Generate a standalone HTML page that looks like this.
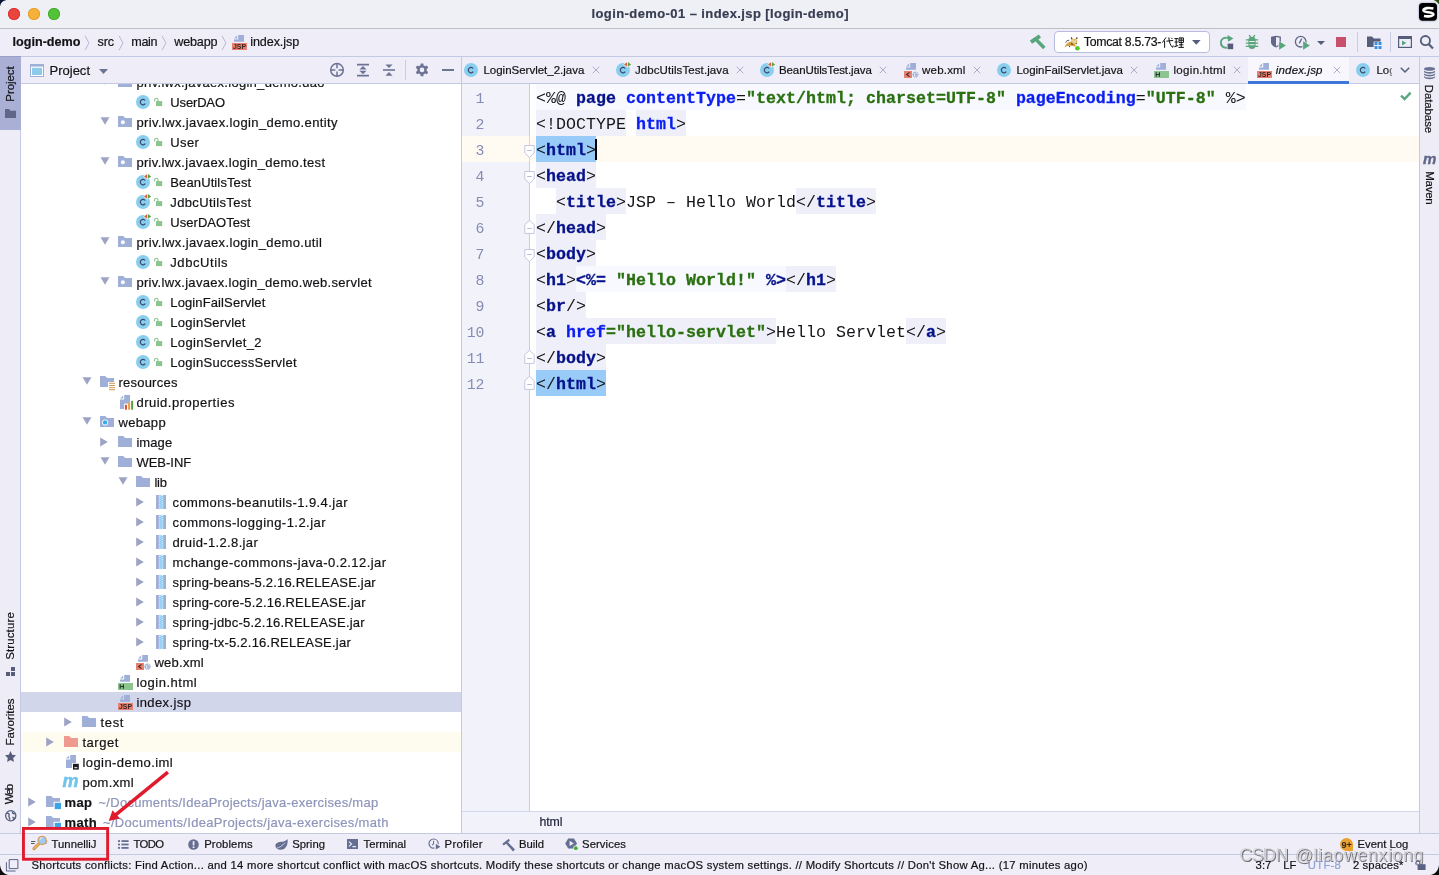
<!DOCTYPE html>
<html><head><meta charset="utf-8"><title>login-demo-01 - index.jsp</title>
<style>
html,body{margin:0;padding:0;}
body{width:1439px;height:875px;overflow:hidden;position:relative;background:#EFEEF8;font-family:"Liberation Sans",sans-serif;}
.t{position:absolute;white-space:pre;line-height:20px;height:20px;-webkit-text-stroke:0.2px currentColor;}
.a{position:absolute;}
svg{position:absolute;overflow:visible;}
.c{position:absolute;white-space:pre;font-family:"Liberation Mono",monospace;font-size:16.6px;line-height:20px;height:26px;letter-spacing:0.0385px;color:#141418;}
.c span{display:inline-block;height:26px;box-sizing:border-box;padding-top:5.3px;vertical-align:top;}
.k{color:#06128a;font-weight:bold;-webkit-text-stroke:0.3px #06128a;}
.n{color:#0a1ef2;font-weight:bold;-webkit-text-stroke:0.3px #0a1ef2;}
.s{color:#2a7011;font-weight:bold;-webkit-text-stroke:0.3px #2a7011;}
.ln{position:absolute;font-family:"Liberation Mono",monospace;font-size:14.8px;line-height:30px;height:26px;color:#858cb3;text-align:right;width:40px;left:444.5px;}
</style></head><body><div style="position:absolute;left:0;top:0;width:1439px;height:875px;overflow:hidden;will-change:transform">
<div class="a" style="left:0px;top:0px;width:1439px;height:28px;background:#EEF0F5;"></div>
<div class="a" style="left:0px;top:28px;width:1439px;height:1px;background:#BEBFC4;"></div>
<div class="a" style="left:8px;top:8px;width:12px;height:12px;border-radius:50%;background:#E8453F;box-shadow:inset 0 0 0 0.8px #DB2E2A"></div>
<div class="a" style="left:28px;top:8px;width:12px;height:12px;border-radius:50%;background:#F5B13A;box-shadow:inset 0 0 0 0.8px #E09A22"></div>
<div class="a" style="left:48px;top:8px;width:12px;height:12px;border-radius:50%;background:#52C336;box-shadow:inset 0 0 0 0.8px #3DA62A"></div>
<span class="t" style="left:591.50px;top:4.00px;font-size:13px;font-weight:bold;color:#383c52;letter-spacing:0.406px;">login-demo-01 – index.jsp [login-demo]</span>
<div class="a" style="left:0px;top:29px;width:1439px;height:27px;background:#EFEEF8;"></div>
<div class="a" style="left:0px;top:56px;width:1439px;height:1px;background:#C4C9E4;"></div>
<div class="a" style="left:0px;top:57px;width:20px;height:776px;background:#EEEDF7;"></div>
<div class="a" style="left:20px;top:57px;width:1px;height:776px;background:#C4C9E4;"></div>
<div class="a" style="left:0px;top:57px;width:20.5px;height:72.6px;background:#A9AFD5;"></div>
<div class="a" style="left:0px;top:56px;width:20.5px;height:1px;background:#98A0CA;"></div>
<div class="a" style="left:21px;top:57px;width:440px;height:26px;background:#EFEEF8;"></div>
<div class="a" style="left:21px;top:83px;width:440px;height:1px;background:#C4C9E4;"></div>
<div class="a" style="left:21px;top:84px;width:440px;height:749px;background:#FFFFFF;"></div>
<div class="a" style="left:461px;top:57px;width:1px;height:776px;background:#C4C9E4;"></div>
<div class="a" style="left:462px;top:57px;width:957px;height:26px;background:#EFEEF8;"></div>
<div class="a" style="left:462px;top:83px;width:957px;height:1px;background:#C4C9E4;"></div>
<div class="a" style="left:462px;top:84px;width:957px;height:727px;background:#FFFFFF;"></div>
<div class="a" style="left:462px;top:84px;width:67px;height:727px;background:#F2F2FA;"></div>
<div class="a" style="left:529px;top:84px;width:1px;height:727px;background:#C9CCE4;"></div>
<div class="a" style="left:1419px;top:57px;width:1px;height:776px;background:#C4C9E4;"></div>
<div class="a" style="left:1420px;top:57px;width:19px;height:776px;background:#EEEDF7;"></div>
<div class="a" style="left:462px;top:811px;width:957px;height:1px;background:#D3D7EC;"></div>
<div class="a" style="left:462px;top:812px;width:957px;height:21px;background:#F2F2FA;"></div>
<div class="a" style="left:0px;top:833px;width:1439px;height:1px;background:#C4C9E4;"></div>
<div class="a" style="left:0px;top:834px;width:1439px;height:20px;background:#EFEEF8;"></div>
<div class="a" style="left:0px;top:854px;width:1439px;height:1px;background:#C4C9E4;"></div>
<div class="a" style="left:0px;top:855px;width:1439px;height:20px;background:#EFEEF8;"></div>
<div class="a" style="left:21px;top:692px;width:440px;height:20px;background:#D2D6EA;"></div>
<div class="a" style="left:21px;top:732px;width:440px;height:20px;background:#FDFCEE;"></div>
<svg style="left:99.5px;top:77px" width="10" height="8" viewBox="0 0 10 8"><path d="M0.5 0.2H9.5L5 7.8Z" fill="#9EA3C5"/></svg>
<svg style="left:118px;top:76px" width="14" height="11" viewBox="0 0 14 11"><path d="M0 0H5.2L7.2 2H14V11H0Z" fill="#9FAFD8"/><circle cx="4.9" cy="6.2" r="2" fill="#fff"/></svg>
<span class="t" style="left:136.40px;top:73.00px;font-size:13px;color:#131316;letter-spacing:0.290px;">priv.lwx.javaex.login_demo.dao</span>
<svg style="left:135px;top:94px" width="16" height="16" viewBox="0 0 16 16"><circle cx="8" cy="8" r="7" fill="#88CFEF"/><path d="M10.2 6.5A2.7 2.7 0 1 0 10.2 9.7" fill="none" stroke="#3B4766" stroke-width="1.2"/></svg>
<svg style="left:152.6px;top:97px" width="10" height="10" viewBox="0 0 10 10"><rect x="3" y="4.1" width="6.2" height="5" fill="#8CC490"/><path d="M1.6 4.3V2.9A1.7 1.7 0 0 1 5 2.9V4.3" fill="none" stroke="#8CC490" stroke-width="1.1"/></svg>
<span class="t" style="left:170.30px;top:93.00px;font-size:13px;color:#131316;letter-spacing:-0.154px;">UserDAO</span>
<svg style="left:99.5px;top:117px" width="10" height="8" viewBox="0 0 10 8"><path d="M0.5 0.2H9.5L5 7.8Z" fill="#9EA3C5"/></svg>
<svg style="left:118px;top:116px" width="14" height="11" viewBox="0 0 14 11"><path d="M0 0H5.2L7.2 2H14V11H0Z" fill="#9FAFD8"/><circle cx="4.9" cy="6.2" r="2" fill="#fff"/></svg>
<span class="t" style="left:136.40px;top:113.00px;font-size:13px;color:#131316;letter-spacing:0.376px;">priv.lwx.javaex.login_demo.entity</span>
<svg style="left:135px;top:134px" width="16" height="16" viewBox="0 0 16 16"><circle cx="8" cy="8" r="7" fill="#88CFEF"/><path d="M10.2 6.5A2.7 2.7 0 1 0 10.2 9.7" fill="none" stroke="#3B4766" stroke-width="1.2"/></svg>
<svg style="left:152.6px;top:137px" width="10" height="10" viewBox="0 0 10 10"><rect x="3" y="4.1" width="6.2" height="5" fill="#8CC490"/><path d="M1.6 4.3V2.9A1.7 1.7 0 0 1 5 2.9V4.3" fill="none" stroke="#8CC490" stroke-width="1.1"/></svg>
<span class="t" style="left:170.30px;top:133.00px;font-size:13px;color:#131316;letter-spacing:0.349px;">User</span>
<svg style="left:99.5px;top:157px" width="10" height="8" viewBox="0 0 10 8"><path d="M0.5 0.2H9.5L5 7.8Z" fill="#9EA3C5"/></svg>
<svg style="left:118px;top:156px" width="14" height="11" viewBox="0 0 14 11"><path d="M0 0H5.2L7.2 2H14V11H0Z" fill="#9FAFD8"/><circle cx="4.9" cy="6.2" r="2" fill="#fff"/></svg>
<span class="t" style="left:136.40px;top:153.00px;font-size:13px;color:#131316;letter-spacing:0.322px;">priv.lwx.javaex.login_demo.test</span>
<svg style="left:135px;top:174px" width="16" height="16" viewBox="0 0 16 16"><circle cx="8" cy="8" r="7" fill="#88CFEF"/><path d="M10.2 6.5A2.7 2.7 0 1 0 10.2 9.7" fill="none" stroke="#3B4766" stroke-width="1.2"/><path d="M8.6 2.4L12.3 -0.4V5.2Z" fill="#fff" stroke="#fff" stroke-width="0.5"/><path d="M12.7 -0.4V5.2L16.6 2.4Z" fill="#fff" stroke="#fff" stroke-width="0.5"/><path d="M9 2.4L12.2 0V4.8Z" fill="#E0623C"/><path d="M13 0V4.8L16.2 2.4Z" fill="#5BA346"/></svg>
<svg style="left:152.6px;top:177px" width="10" height="10" viewBox="0 0 10 10"><rect x="3" y="4.1" width="6.2" height="5" fill="#8CC490"/><path d="M1.6 4.3V2.9A1.7 1.7 0 0 1 5 2.9V4.3" fill="none" stroke="#8CC490" stroke-width="1.1"/></svg>
<span class="t" style="left:170.30px;top:173.00px;font-size:13px;color:#131316;letter-spacing:0.118px;">BeanUtilsTest</span>
<svg style="left:135px;top:194px" width="16" height="16" viewBox="0 0 16 16"><circle cx="8" cy="8" r="7" fill="#88CFEF"/><path d="M10.2 6.5A2.7 2.7 0 1 0 10.2 9.7" fill="none" stroke="#3B4766" stroke-width="1.2"/><path d="M8.6 2.4L12.3 -0.4V5.2Z" fill="#fff" stroke="#fff" stroke-width="0.5"/><path d="M12.7 -0.4V5.2L16.6 2.4Z" fill="#fff" stroke="#fff" stroke-width="0.5"/><path d="M9 2.4L12.2 0V4.8Z" fill="#E0623C"/><path d="M13 0V4.8L16.2 2.4Z" fill="#5BA346"/></svg>
<svg style="left:152.6px;top:197px" width="10" height="10" viewBox="0 0 10 10"><rect x="3" y="4.1" width="6.2" height="5" fill="#8CC490"/><path d="M1.6 4.3V2.9A1.7 1.7 0 0 1 5 2.9V4.3" fill="none" stroke="#8CC490" stroke-width="1.1"/></svg>
<span class="t" style="left:170.30px;top:193.00px;font-size:13px;color:#131316;letter-spacing:0.360px;">JdbcUtilsTest</span>
<svg style="left:135px;top:214px" width="16" height="16" viewBox="0 0 16 16"><circle cx="8" cy="8" r="7" fill="#88CFEF"/><path d="M10.2 6.5A2.7 2.7 0 1 0 10.2 9.7" fill="none" stroke="#3B4766" stroke-width="1.2"/><path d="M8.6 2.4L12.3 -0.4V5.2Z" fill="#fff" stroke="#fff" stroke-width="0.5"/><path d="M12.7 -0.4V5.2L16.6 2.4Z" fill="#fff" stroke="#fff" stroke-width="0.5"/><path d="M9 2.4L12.2 0V4.8Z" fill="#E0623C"/><path d="M13 0V4.8L16.2 2.4Z" fill="#5BA346"/></svg>
<svg style="left:152.6px;top:217px" width="10" height="10" viewBox="0 0 10 10"><rect x="3" y="4.1" width="6.2" height="5" fill="#8CC490"/><path d="M1.6 4.3V2.9A1.7 1.7 0 0 1 5 2.9V4.3" fill="none" stroke="#8CC490" stroke-width="1.1"/></svg>
<span class="t" style="left:170.30px;top:213.00px;font-size:13px;color:#131316;letter-spacing:0.043px;">UserDAOTest</span>
<svg style="left:99.5px;top:237px" width="10" height="8" viewBox="0 0 10 8"><path d="M0.5 0.2H9.5L5 7.8Z" fill="#9EA3C5"/></svg>
<svg style="left:118px;top:236px" width="14" height="11" viewBox="0 0 14 11"><path d="M0 0H5.2L7.2 2H14V11H0Z" fill="#9FAFD8"/><circle cx="4.9" cy="6.2" r="2" fill="#fff"/></svg>
<span class="t" style="left:136.40px;top:233.00px;font-size:13px;color:#131316;letter-spacing:0.366px;">priv.lwx.javaex.login_demo.util</span>
<svg style="left:135px;top:254px" width="16" height="16" viewBox="0 0 16 16"><circle cx="8" cy="8" r="7" fill="#88CFEF"/><path d="M10.2 6.5A2.7 2.7 0 1 0 10.2 9.7" fill="none" stroke="#3B4766" stroke-width="1.2"/></svg>
<svg style="left:152.6px;top:257px" width="10" height="10" viewBox="0 0 10 10"><rect x="3" y="4.1" width="6.2" height="5" fill="#8CC490"/><path d="M1.6 4.3V2.9A1.7 1.7 0 0 1 5 2.9V4.3" fill="none" stroke="#8CC490" stroke-width="1.1"/></svg>
<span class="t" style="left:170.30px;top:253.00px;font-size:13px;color:#131316;letter-spacing:0.569px;">JdbcUtils</span>
<svg style="left:99.5px;top:277px" width="10" height="8" viewBox="0 0 10 8"><path d="M0.5 0.2H9.5L5 7.8Z" fill="#9EA3C5"/></svg>
<svg style="left:118px;top:276px" width="14" height="11" viewBox="0 0 14 11"><path d="M0 0H5.2L7.2 2H14V11H0Z" fill="#9FAFD8"/><circle cx="4.9" cy="6.2" r="2" fill="#fff"/></svg>
<span class="t" style="left:136.40px;top:273.00px;font-size:13px;color:#131316;letter-spacing:0.309px;">priv.lwx.javaex.login_demo.web.servlet</span>
<svg style="left:135px;top:294px" width="16" height="16" viewBox="0 0 16 16"><circle cx="8" cy="8" r="7" fill="#88CFEF"/><path d="M10.2 6.5A2.7 2.7 0 1 0 10.2 9.7" fill="none" stroke="#3B4766" stroke-width="1.2"/></svg>
<svg style="left:152.6px;top:297px" width="10" height="10" viewBox="0 0 10 10"><rect x="3" y="4.1" width="6.2" height="5" fill="#8CC490"/><path d="M1.6 4.3V2.9A1.7 1.7 0 0 1 5 2.9V4.3" fill="none" stroke="#8CC490" stroke-width="1.1"/></svg>
<span class="t" style="left:170.30px;top:293.00px;font-size:13px;color:#131316;letter-spacing:0.119px;">LoginFailServlet</span>
<svg style="left:135px;top:314px" width="16" height="16" viewBox="0 0 16 16"><circle cx="8" cy="8" r="7" fill="#88CFEF"/><path d="M10.2 6.5A2.7 2.7 0 1 0 10.2 9.7" fill="none" stroke="#3B4766" stroke-width="1.2"/></svg>
<svg style="left:152.6px;top:317px" width="10" height="10" viewBox="0 0 10 10"><rect x="3" y="4.1" width="6.2" height="5" fill="#8CC490"/><path d="M1.6 4.3V2.9A1.7 1.7 0 0 1 5 2.9V4.3" fill="none" stroke="#8CC490" stroke-width="1.1"/></svg>
<span class="t" style="left:170.30px;top:313.00px;font-size:13px;color:#131316;letter-spacing:0.265px;">LoginServlet</span>
<svg style="left:135px;top:334px" width="16" height="16" viewBox="0 0 16 16"><circle cx="8" cy="8" r="7" fill="#88CFEF"/><path d="M10.2 6.5A2.7 2.7 0 1 0 10.2 9.7" fill="none" stroke="#3B4766" stroke-width="1.2"/></svg>
<svg style="left:152.6px;top:337px" width="10" height="10" viewBox="0 0 10 10"><rect x="3" y="4.1" width="6.2" height="5" fill="#8CC490"/><path d="M1.6 4.3V2.9A1.7 1.7 0 0 1 5 2.9V4.3" fill="none" stroke="#8CC490" stroke-width="1.1"/></svg>
<span class="t" style="left:170.30px;top:333.00px;font-size:13px;color:#131316;letter-spacing:0.344px;">LoginServlet_2</span>
<svg style="left:135px;top:354px" width="16" height="16" viewBox="0 0 16 16"><circle cx="8" cy="8" r="7" fill="#88CFEF"/><path d="M10.2 6.5A2.7 2.7 0 1 0 10.2 9.7" fill="none" stroke="#3B4766" stroke-width="1.2"/></svg>
<svg style="left:152.6px;top:357px" width="10" height="10" viewBox="0 0 10 10"><rect x="3" y="4.1" width="6.2" height="5" fill="#8CC490"/><path d="M1.6 4.3V2.9A1.7 1.7 0 0 1 5 2.9V4.3" fill="none" stroke="#8CC490" stroke-width="1.1"/></svg>
<span class="t" style="left:170.30px;top:353.00px;font-size:13px;color:#131316;letter-spacing:0.272px;">LoginSuccessServlet</span>
<svg style="left:81.5px;top:377px" width="10" height="8" viewBox="0 0 10 8"><path d="M0.5 0.2H9.5L5 7.8Z" fill="#9EA3C5"/></svg>
<svg style="left:100px;top:376px" width="16" height="14" viewBox="0 0 16 14"><path d="M0 0H5.2L7.2 2H14V11H0Z" fill="#9FAFD8"/><rect x="8" y="6" width="8" height="8" fill="#fff"/><path d="M9 7.3H15M9 9.5H15M9 11.7H15M9 13.8H15" stroke="#D09A4A" stroke-width="1.1"/></svg>
<span class="t" style="left:118.40px;top:373.00px;font-size:13px;color:#131316;letter-spacing:0.240px;">resources</span>
<svg style="left:120px;top:395px" width="14" height="15" viewBox="0 0 14 15"><path d="M4.2 0H10V14H0V4.6H4.2Z" fill="#9FAFD8"/><path d="M3.1 0.5V3.5H0.1Z" fill="#9FAFD8"/><rect x="4.2" y="8.6" width="9.8" height="6" fill="#fff"/><rect x="5" y="9.8" width="2" height="4.9" fill="#DB5831"/><rect x="8.1" y="7.8" width="2" height="6.9" fill="#EB9D41"/><rect x="11.1" y="5.8" width="2" height="8.9" fill="#5AA23E"/></svg>
<span class="t" style="left:136.40px;top:393.00px;font-size:13px;color:#131316;letter-spacing:0.511px;">druid.properties</span>
<svg style="left:81.5px;top:417px" width="10" height="8" viewBox="0 0 10 8"><path d="M0.5 0.2H9.5L5 7.8Z" fill="#9EA3C5"/></svg>
<svg style="left:100px;top:416px" width="14" height="11" viewBox="0 0 14 11"><path d="M0 0H5.2L7.2 2H14V11H0Z" fill="#9FAFD8"/><circle cx="5.1" cy="6.4" r="3" fill="#fff"/><circle cx="5.1" cy="6.4" r="2.2" fill="#36ABEA"/></svg>
<span class="t" style="left:118.40px;top:413.00px;font-size:13px;color:#131316;letter-spacing:0.351px;">webapp</span>
<svg style="left:100px;top:436.5px" width="8" height="10" viewBox="0 0 8 10"><path d="M0.2 0.5V9.5L7.8 5Z" fill="#9EA3C5"/></svg>
<svg style="left:118px;top:436px" width="14" height="11" viewBox="0 0 14 11"><path d="M0 0H5.2L7.2 2H14V11H0Z" fill="#9FAFD8"/></svg>
<span class="t" style="left:136.40px;top:433.00px;font-size:13px;color:#131316;letter-spacing:0.095px;">image</span>
<svg style="left:99.5px;top:457px" width="10" height="8" viewBox="0 0 10 8"><path d="M0.5 0.2H9.5L5 7.8Z" fill="#9EA3C5"/></svg>
<svg style="left:118px;top:456px" width="14" height="11" viewBox="0 0 14 11"><path d="M0 0H5.2L7.2 2H14V11H0Z" fill="#9FAFD8"/></svg>
<span class="t" style="left:136.40px;top:453.00px;font-size:13px;color:#131316;letter-spacing:0.002px;">WEB-INF</span>
<svg style="left:117.5px;top:477px" width="10" height="8" viewBox="0 0 10 8"><path d="M0.5 0.2H9.5L5 7.8Z" fill="#9EA3C5"/></svg>
<svg style="left:136px;top:476px" width="14" height="11" viewBox="0 0 14 11"><path d="M0 0H5.2L7.2 2H14V11H0Z" fill="#9FAFD8"/></svg>
<span class="t" style="left:154.40px;top:473.00px;font-size:13px;color:#131316;letter-spacing:-0.208px;">lib</span>
<svg style="left:136px;top:496.5px" width="8" height="10" viewBox="0 0 8 10"><path d="M0.2 0.5V9.5L7.8 5Z" fill="#9EA3C5"/></svg>
<svg style="left:156px;top:495px" width="10" height="14" viewBox="0 0 10 14"><rect x="0" y="0" width="2.9" height="14" fill="#9FAFD8"/><rect x="7.1" y="0" width="2.9" height="14" fill="#9FAFD8"/><path d="M3.2 0.3L6.8 1.3L3.2 2.25M3.2 2.25L6.8 3.25L3.2 4.2M3.2 4.2L6.8 5.2L3.2 6.15M3.2 6.15L6.8 7.15L3.2 8.1M3.2 8.1L6.8 9.1L3.2 10.05M3.2 10.05L6.8 11.05L3.2 12M3.2 12L6.8 13L3.2 13.95" stroke="#45AEEA" stroke-width="0.6" fill="none"/></svg>
<span class="t" style="left:172.50px;top:493.00px;font-size:13px;color:#131316;letter-spacing:0.426px;">commons-beanutils-1.9.4.jar</span>
<svg style="left:136px;top:516.5px" width="8" height="10" viewBox="0 0 8 10"><path d="M0.2 0.5V9.5L7.8 5Z" fill="#9EA3C5"/></svg>
<svg style="left:156px;top:515px" width="10" height="14" viewBox="0 0 10 14"><rect x="0" y="0" width="2.9" height="14" fill="#9FAFD8"/><rect x="7.1" y="0" width="2.9" height="14" fill="#9FAFD8"/><path d="M3.2 0.3L6.8 1.3L3.2 2.25M3.2 2.25L6.8 3.25L3.2 4.2M3.2 4.2L6.8 5.2L3.2 6.15M3.2 6.15L6.8 7.15L3.2 8.1M3.2 8.1L6.8 9.1L3.2 10.05M3.2 10.05L6.8 11.05L3.2 12M3.2 12L6.8 13L3.2 13.95" stroke="#45AEEA" stroke-width="0.6" fill="none"/></svg>
<span class="t" style="left:172.50px;top:513.00px;font-size:13px;color:#131316;letter-spacing:0.451px;">commons-logging-1.2.jar</span>
<svg style="left:136px;top:536.5px" width="8" height="10" viewBox="0 0 8 10"><path d="M0.2 0.5V9.5L7.8 5Z" fill="#9EA3C5"/></svg>
<svg style="left:156px;top:535px" width="10" height="14" viewBox="0 0 10 14"><rect x="0" y="0" width="2.9" height="14" fill="#9FAFD8"/><rect x="7.1" y="0" width="2.9" height="14" fill="#9FAFD8"/><path d="M3.2 0.3L6.8 1.3L3.2 2.25M3.2 2.25L6.8 3.25L3.2 4.2M3.2 4.2L6.8 5.2L3.2 6.15M3.2 6.15L6.8 7.15L3.2 8.1M3.2 8.1L6.8 9.1L3.2 10.05M3.2 10.05L6.8 11.05L3.2 12M3.2 12L6.8 13L3.2 13.95" stroke="#45AEEA" stroke-width="0.6" fill="none"/></svg>
<span class="t" style="left:172.50px;top:533.00px;font-size:13px;color:#131316;letter-spacing:0.363px;">druid-1.2.8.jar</span>
<svg style="left:136px;top:556.5px" width="8" height="10" viewBox="0 0 8 10"><path d="M0.2 0.5V9.5L7.8 5Z" fill="#9EA3C5"/></svg>
<svg style="left:156px;top:555px" width="10" height="14" viewBox="0 0 10 14"><rect x="0" y="0" width="2.9" height="14" fill="#9FAFD8"/><rect x="7.1" y="0" width="2.9" height="14" fill="#9FAFD8"/><path d="M3.2 0.3L6.8 1.3L3.2 2.25M3.2 2.25L6.8 3.25L3.2 4.2M3.2 4.2L6.8 5.2L3.2 6.15M3.2 6.15L6.8 7.15L3.2 8.1M3.2 8.1L6.8 9.1L3.2 10.05M3.2 10.05L6.8 11.05L3.2 12M3.2 12L6.8 13L3.2 13.95" stroke="#45AEEA" stroke-width="0.6" fill="none"/></svg>
<span class="t" style="left:172.50px;top:553.00px;font-size:13px;color:#131316;letter-spacing:0.421px;">mchange-commons-java-0.2.12.jar</span>
<svg style="left:136px;top:576.5px" width="8" height="10" viewBox="0 0 8 10"><path d="M0.2 0.5V9.5L7.8 5Z" fill="#9EA3C5"/></svg>
<svg style="left:156px;top:575px" width="10" height="14" viewBox="0 0 10 14"><rect x="0" y="0" width="2.9" height="14" fill="#9FAFD8"/><rect x="7.1" y="0" width="2.9" height="14" fill="#9FAFD8"/><path d="M3.2 0.3L6.8 1.3L3.2 2.25M3.2 2.25L6.8 3.25L3.2 4.2M3.2 4.2L6.8 5.2L3.2 6.15M3.2 6.15L6.8 7.15L3.2 8.1M3.2 8.1L6.8 9.1L3.2 10.05M3.2 10.05L6.8 11.05L3.2 12M3.2 12L6.8 13L3.2 13.95" stroke="#45AEEA" stroke-width="0.6" fill="none"/></svg>
<span class="t" style="left:172.50px;top:573.00px;font-size:13px;color:#131316;letter-spacing:0.197px;">spring-beans-5.2.16.RELEASE.jar</span>
<svg style="left:136px;top:596.5px" width="8" height="10" viewBox="0 0 8 10"><path d="M0.2 0.5V9.5L7.8 5Z" fill="#9EA3C5"/></svg>
<svg style="left:156px;top:595px" width="10" height="14" viewBox="0 0 10 14"><rect x="0" y="0" width="2.9" height="14" fill="#9FAFD8"/><rect x="7.1" y="0" width="2.9" height="14" fill="#9FAFD8"/><path d="M3.2 0.3L6.8 1.3L3.2 2.25M3.2 2.25L6.8 3.25L3.2 4.2M3.2 4.2L6.8 5.2L3.2 6.15M3.2 6.15L6.8 7.15L3.2 8.1M3.2 8.1L6.8 9.1L3.2 10.05M3.2 10.05L6.8 11.05L3.2 12M3.2 12L6.8 13L3.2 13.95" stroke="#45AEEA" stroke-width="0.6" fill="none"/></svg>
<span class="t" style="left:172.50px;top:593.00px;font-size:13px;color:#131316;letter-spacing:0.202px;">spring-core-5.2.16.RELEASE.jar</span>
<svg style="left:136px;top:616.5px" width="8" height="10" viewBox="0 0 8 10"><path d="M0.2 0.5V9.5L7.8 5Z" fill="#9EA3C5"/></svg>
<svg style="left:156px;top:615px" width="10" height="14" viewBox="0 0 10 14"><rect x="0" y="0" width="2.9" height="14" fill="#9FAFD8"/><rect x="7.1" y="0" width="2.9" height="14" fill="#9FAFD8"/><path d="M3.2 0.3L6.8 1.3L3.2 2.25M3.2 2.25L6.8 3.25L3.2 4.2M3.2 4.2L6.8 5.2L3.2 6.15M3.2 6.15L6.8 7.15L3.2 8.1M3.2 8.1L6.8 9.1L3.2 10.05M3.2 10.05L6.8 11.05L3.2 12M3.2 12L6.8 13L3.2 13.95" stroke="#45AEEA" stroke-width="0.6" fill="none"/></svg>
<span class="t" style="left:172.50px;top:613.00px;font-size:13px;color:#131316;letter-spacing:0.221px;">spring-jdbc-5.2.16.RELEASE.jar</span>
<svg style="left:136px;top:636.5px" width="8" height="10" viewBox="0 0 8 10"><path d="M0.2 0.5V9.5L7.8 5Z" fill="#9EA3C5"/></svg>
<svg style="left:156px;top:635px" width="10" height="14" viewBox="0 0 10 14"><rect x="0" y="0" width="2.9" height="14" fill="#9FAFD8"/><rect x="7.1" y="0" width="2.9" height="14" fill="#9FAFD8"/><path d="M3.2 0.3L6.8 1.3L3.2 2.25M3.2 2.25L6.8 3.25L3.2 4.2M3.2 4.2L6.8 5.2L3.2 6.15M3.2 6.15L6.8 7.15L3.2 8.1M3.2 8.1L6.8 9.1L3.2 10.05M3.2 10.05L6.8 11.05L3.2 12M3.2 12L6.8 13L3.2 13.95" stroke="#45AEEA" stroke-width="0.6" fill="none"/></svg>
<span class="t" style="left:172.50px;top:633.00px;font-size:13px;color:#131316;letter-spacing:0.234px;">spring-tx-5.2.16.RELEASE.jar</span>
<svg style="left:136px;top:655px" width="15" height="15" viewBox="0 0 15 15"><path d="M6.2 0H12V6.8H2V4.6H6.2Z" fill="#9FAFD8"/><path d="M5.1 0.5V3.5H2.1Z" fill="#9FAFD8"/><rect x="0" y="8" width="8" height="7" fill="#E8806F"/><path d="M5.6 9.4L2.6 11.5L5.6 13.6" stroke="#3a2622" stroke-width="1.1" fill="none"/><circle cx="11.5" cy="11.5" r="3.6" fill="#fff"/><circle cx="11.5" cy="11.5" r="3.1" fill="#9FAFD8"/><path d="M9.6 10.2C10.8 9.8 11 11 10.4 11.8C10.2 12.6 11 13.2 11.2 14M12.4 9C12 10 13 10.6 13.8 10.4M12.6 12.4L13.6 13" stroke="#fff" stroke-width="0.9" fill="none"/></svg>
<span class="t" style="left:154.40px;top:653.00px;font-size:13px;color:#131316;letter-spacing:0.269px;">web.xml</span>
<svg style="left:118px;top:675px" width="15" height="15" viewBox="0 0 15 15"><path d="M6.2 0H12V6.8H2V4.6H6.2Z" fill="#9FAFD8"/><path d="M5.1 0.5V3.5H2.1Z" fill="#9FAFD8"/><rect x="0" y="8" width="15" height="7" fill="#8CC590"/><path d="M2.2 9.3V13.8M5.4 9.3V13.8M2.2 11.5H5.4" stroke="#2B3A2D" stroke-width="1.2" fill="none"/></svg>
<span class="t" style="left:136.40px;top:673.00px;font-size:13px;color:#131316;letter-spacing:0.518px;">login.html</span>
<svg style="left:118px;top:695px" width="15" height="15" viewBox="0 0 15 15"><path d="M6.2 0H12V6.8H2V4.6H6.2Z" fill="#9FAFD8"/><path d="M5.1 0.5V3.5H2.1Z" fill="#9FAFD8"/><rect x="0" y="8" width="15" height="7" fill="#E8806F"/><text x="7.5" y="14.1" font-family="Liberation Sans,sans-serif" font-weight="bold" font-size="6.4" text-anchor="middle" fill="#3a2622" textLength="13" lengthAdjust="spacingAndGlyphs">JSP</text></svg>
<span class="t" style="left:136.40px;top:693.00px;font-size:13px;color:#131316;letter-spacing:0.411px;">index.jsp</span>
<svg style="left:64px;top:716.5px" width="8" height="10" viewBox="0 0 8 10"><path d="M0.2 0.5V9.5L7.8 5Z" fill="#9EA3C5"/></svg>
<svg style="left:82px;top:716px" width="14" height="11" viewBox="0 0 14 11"><path d="M0 0H5.2L7.2 2H14V11H0Z" fill="#9FAFD8"/></svg>
<span class="t" style="left:100.40px;top:713.00px;font-size:13px;color:#131316;letter-spacing:0.710px;">test</span>
<svg style="left:46px;top:736.5px" width="8" height="10" viewBox="0 0 8 10"><path d="M0.2 0.5V9.5L7.8 5Z" fill="#9EA3C5"/></svg>
<svg style="left:64px;top:736px" width="14" height="11" viewBox="0 0 14 11"><path d="M0 0H5.2L7.2 2H14V11H0Z" fill="#EE9A8E"/></svg>
<span class="t" style="left:82.40px;top:733.00px;font-size:13px;color:#131316;letter-spacing:0.550px;">target</span>
<svg style="left:66px;top:755px" width="14" height="15" viewBox="0 0 14 15"><path d="M4.2 0H10V13H0V4.6H4.2Z" fill="#9FAFD8"/><path d="M3.1 0.5V3.5H0.1Z" fill="#9FAFD8"/><rect x="6" y="8" width="7.5" height="7" fill="#fff"/><rect x="7" y="8.8" width="5.8" height="5.8" fill="#1b1b1f"/><rect x="8.3" y="12.2" width="3" height="1" fill="#fff"/></svg>
<span class="t" style="left:82.40px;top:753.00px;font-size:13px;color:#131316;letter-spacing:0.443px;">login-demo.iml</span>
<svg style="left:63px;top:775px" width="16" height="14" viewBox="0 0 16 14"><text x="-0.4" y="12.2" font-family="Liberation Sans,sans-serif" font-weight="bold" font-style="italic" font-size="18.5" fill="#6FC4EC" stroke="#6FC4EC" stroke-width="0.5" textLength="16" lengthAdjust="spacingAndGlyphs">m</text></svg>
<span class="t" style="left:82.40px;top:773.00px;font-size:13px;color:#131316;letter-spacing:0.362px;">pom.xml</span>
<svg style="left:28px;top:796.5px" width="8" height="10" viewBox="0 0 8 10"><path d="M0.2 0.5V9.5L7.8 5Z" fill="#9EA3C5"/></svg>
<svg style="left:46px;top:796px" width="16" height="14" viewBox="0 0 16 14"><path d="M0 0H5.2L7.2 2H14V11H0Z" fill="#9FAFD8"/><rect x="7.6" y="5.8" width="8" height="8" fill="#fff"/><rect x="8.7" y="6.8" width="6.3" height="6.3" fill="#3BA4E8"/></svg>
<span class="t" style="left:64.60px;top:793.00px;font-size:13px;font-weight:bold;color:#131316;letter-spacing:0.333px;">map</span>
<span class="t" style="left:98.50px;top:793.00px;font-size:13px;color:#8E95BA;letter-spacing:0.268px;">~/Documents/IdeaProjects/java-exercises/map</span>
<svg style="left:28px;top:816.5px" width="8" height="10" viewBox="0 0 8 10"><path d="M0.2 0.5V9.5L7.8 5Z" fill="#9EA3C5"/></svg>
<svg style="left:46px;top:816px" width="16" height="14" viewBox="0 0 16 14"><path d="M0 0H5.2L7.2 2H14V11H0Z" fill="#9FAFD8"/><rect x="7.6" y="5.8" width="8" height="8" fill="#fff"/><rect x="8.7" y="6.8" width="6.3" height="6.3" fill="#3BA4E8"/></svg>
<span class="t" style="left:64.60px;top:813.00px;font-size:13px;font-weight:bold;color:#131316;letter-spacing:0.312px;">math</span>
<span class="t" style="left:103.00px;top:813.00px;font-size:13px;color:#8E95BA;letter-spacing:0.311px;">~/Documents/IdeaProjects/java-exercises/math</span>
<div class="a" style="left:21px;top:57px;width:440px;height:26px;background:#EFEEF8;"></div>
<div class="a" style="left:21px;top:83px;width:440px;height:1px;background:#C4C9E4;"></div>
<div class="a" style="left:0px;top:833px;width:461px;height:1px;background:#C4C9E4;"></div>
<div class="a" style="left:0px;top:834px;width:461px;height:20px;background:#EFEEF8;"></div>
<div class="a" style="left:462px;top:136px;width:957px;height:26px;background:#FFFBF3;"></div>
<div class="a" style="left:529px;top:136px;width:1px;height:26px;background:#D5D6E6;"></div>
<div class="c" style="left:536px;top:84px"><span style="background:#F8F9FE">&lt;%@ </span><span class="k" style="background:#F8F9FE">page</span><span style="background:#F8F9FE"> </span><span class="n" style="background:#F8F9FE">contentType</span><span style="background:#F8F9FE">=</span><span class="s" style="background:#F8F9FE">&quot;text/html; charset=UTF-8&quot;</span><span style="background:#F8F9FE"> </span><span class="n" style="background:#F8F9FE">pageEncoding</span><span style="background:#F8F9FE">=</span><span class="s" style="background:#F8F9FE">&quot;UTF-8&quot;</span><span style="background:#F8F9FE"> %&gt;</span></div>
<div class="ln" style="top:84px">1</div>
<div class="c" style="left:536px;top:110px"><span style="background:#EFEFF9">&lt;!DOCTYPE</span><span> </span><span class="n" style="background:#EFEFF9">html</span><span style="background:#EFEFF9">&gt;</span></div>
<div class="ln" style="top:110px">2</div>
<div class="c" style="left:536px;top:136px"><span style="background:#99CBF8">&lt;</span><span class="k" style="background:#99CBF8">html</span><span style="background:#99CBF8">&gt;</span></div>
<div class="ln" style="top:136px">3</div>
<div class="c" style="left:536px;top:162px"><span style="background:#EFEFF9">&lt;</span><span class="k" style="background:#EFEFF9">head</span><span style="background:#EFEFF9">&gt;</span></div>
<div class="ln" style="top:162px">4</div>
<div class="c" style="left:536px;top:188px"><span>  </span><span style="background:#EFEFF9">&lt;</span><span class="k" style="background:#EFEFF9">title</span><span style="background:#EFEFF9">&gt;</span><span>JSP – Hello World</span><span style="background:#EFEFF9">&lt;/</span><span class="k" style="background:#EFEFF9">title</span><span style="background:#EFEFF9">&gt;</span></div>
<div class="ln" style="top:188px">5</div>
<div class="c" style="left:536px;top:214px"><span style="background:#EFEFF9">&lt;/</span><span class="k" style="background:#EFEFF9">head</span><span style="background:#EFEFF9">&gt;</span></div>
<div class="ln" style="top:214px">6</div>
<div class="c" style="left:536px;top:240px"><span style="background:#EFEFF9">&lt;</span><span class="k" style="background:#EFEFF9">body</span><span style="background:#EFEFF9">&gt;</span></div>
<div class="ln" style="top:240px">7</div>
<div class="c" style="left:536px;top:266px"><span style="background:#EFEFF9">&lt;</span><span class="k" style="background:#EFEFF9">h1</span><span style="background:#EFEFF9">&gt;</span><span class="k" style="background:#F8F9FE">&lt;%= </span><span class="s" style="background:#F8F9FE">&quot;Hello World!&quot;</span><span class="k" style="background:#F8F9FE"> %&gt;</span><span style="background:#EFEFF9">&lt;/</span><span class="k" style="background:#EFEFF9">h1</span><span style="background:#EFEFF9">&gt;</span></div>
<div class="ln" style="top:266px">8</div>
<div class="c" style="left:536px;top:292px"><span style="background:#EFEFF9">&lt;</span><span class="k" style="background:#EFEFF9">br</span><span style="background:#EFEFF9">/&gt;</span></div>
<div class="ln" style="top:292px">9</div>
<div class="c" style="left:536px;top:318px"><span style="background:#EFEFF9">&lt;</span><span class="k" style="background:#EFEFF9">a</span><span style="background:#EFEFF9"> </span><span class="n" style="background:#EFEFF9">href</span><span class="s" style="background:#EFEFF9">=&quot;hello-servlet&quot;</span><span style="background:#EFEFF9">&gt;</span><span>Hello Servlet</span><span style="background:#EFEFF9">&lt;/</span><span class="k" style="background:#EFEFF9">a</span><span style="background:#EFEFF9">&gt;</span></div>
<div class="ln" style="top:318px">10</div>
<div class="c" style="left:536px;top:344px"><span style="background:#EFEFF9">&lt;/</span><span class="k" style="background:#EFEFF9">body</span><span style="background:#EFEFF9">&gt;</span></div>
<div class="ln" style="top:344px">11</div>
<div class="c" style="left:536px;top:370px"><span style="background:#99CBF8">&lt;/</span><span class="k" style="background:#99CBF8">html</span><span style="background:#99CBF8">&gt;</span></div>
<div class="ln" style="top:370px">12</div>
<div class="a" style="left:595px;top:139px;width:2px;height:21px;background:#000;"></div>
<svg style="left:523px;top:144px" width="14" height="16" viewBox="0 0 14 16"><path d="M1.8 1.5H11.2V9L6.5 13.6L1.8 9Z" fill="#fff" stroke="#C3C7E2" stroke-width="1"/><path d="M4.2 6.5H8.8" stroke="#B6BBDA" stroke-width="1"/></svg>
<svg style="left:523px;top:170px" width="14" height="16" viewBox="0 0 14 16"><path d="M1.8 1.5H11.2V9L6.5 13.6L1.8 9Z" fill="#fff" stroke="#C3C7E2" stroke-width="1"/><path d="M4.2 6.5H8.8" stroke="#B6BBDA" stroke-width="1"/></svg>
<svg style="left:523px;top:248px" width="14" height="16" viewBox="0 0 14 16"><path d="M1.8 1.5H11.2V9L6.5 13.6L1.8 9Z" fill="#fff" stroke="#C3C7E2" stroke-width="1"/><path d="M4.2 6.5H8.8" stroke="#B6BBDA" stroke-width="1"/></svg>
<svg style="left:523px;top:219px" width="14" height="16" viewBox="0 0 14 16"><path d="M1.8 14.4H11.2V5.6L6.5 1.4L1.8 5.6Z" fill="#fff" stroke="#C3C7E2" stroke-width="1"/><path d="M4.2 9.5H8.8" stroke="#B6BBDA" stroke-width="1"/></svg>
<svg style="left:523px;top:349px" width="14" height="16" viewBox="0 0 14 16"><path d="M1.8 14.4H11.2V5.6L6.5 1.4L1.8 5.6Z" fill="#fff" stroke="#C3C7E2" stroke-width="1"/><path d="M4.2 9.5H8.8" stroke="#B6BBDA" stroke-width="1"/></svg>
<svg style="left:523px;top:375px" width="14" height="16" viewBox="0 0 14 16"><path d="M1.8 14.4H11.2V5.6L6.5 1.4L1.8 5.6Z" fill="#fff" stroke="#C3C7E2" stroke-width="1"/><path d="M4.2 9.5H8.8" stroke="#B6BBDA" stroke-width="1"/></svg>
<svg style="left:1398px;top:89.1px" width="16" height="14" viewBox="0 0 16 14"><path d="M3 6.7L6.6 10L12.6 3.7" fill="none" stroke="#5BA880" stroke-width="2.4"/></svg>
<span class="t" style="left:539.50px;top:812.00px;font-size:12.3px;color:#23263b;letter-spacing:-0.078px;">html</span>
<span class="t" style="left:12.50px;top:32.00px;font-size:12.6px;font-weight:bold;color:#131316;letter-spacing:0.016px;">login-demo</span>
<svg style="left:84px;top:34.5px" width="6" height="16" viewBox="0 0 6 16"><path d="M1 0.8L5 8L1 15.2" fill="none" stroke="#B4B9D6" stroke-width="1"/></svg>
<span class="t" style="left:97.60px;top:32.00px;font-size:12.6px;color:#131316;letter-spacing:-0.198px;">src</span>
<svg style="left:118px;top:34.5px" width="6" height="16" viewBox="0 0 6 16"><path d="M1 0.8L5 8L1 15.2" fill="none" stroke="#B4B9D6" stroke-width="1"/></svg>
<span class="t" style="left:131.20px;top:32.00px;font-size:12.6px;color:#131316;letter-spacing:-0.299px;">main</span>
<svg style="left:161px;top:34.5px" width="6" height="16" viewBox="0 0 6 16"><path d="M1 0.8L5 8L1 15.2" fill="none" stroke="#B4B9D6" stroke-width="1"/></svg>
<span class="t" style="left:174.20px;top:32.00px;font-size:12.6px;color:#131316;letter-spacing:-0.145px;">webapp</span>
<svg style="left:221px;top:34.5px" width="6" height="16" viewBox="0 0 6 16"><path d="M1 0.8L5 8L1 15.2" fill="none" stroke="#B4B9D6" stroke-width="1"/></svg>
<svg style="left:232px;top:35px" width="15" height="15" viewBox="0 0 15 15"><path d="M6.2 0H12V6.8H2V4.6H6.2Z" fill="#9FAFD8"/><path d="M5.1 0.5V3.5H2.1Z" fill="#9FAFD8"/><rect x="0" y="8" width="15" height="7" fill="#E8806F"/><text x="7.5" y="14.1" font-family="Liberation Sans,sans-serif" font-weight="bold" font-size="6.4" text-anchor="middle" fill="#3a2622" textLength="13" lengthAdjust="spacingAndGlyphs">JSP</text></svg>
<span class="t" style="left:250.20px;top:32.00px;font-size:12.6px;color:#131316;letter-spacing:-0.090px;">index.jsp</span>
<svg style="left:1028px;top:33px" width="20" height="18" viewBox="0 0 20 18"><path d="M1.8 7.4L10.8 1.4L13 4.6L10.4 6.5L17.6 13.8L15 16.2L7.7 8.4L4 10.7Z" fill="#59A57C"/></svg>
<div class="a" style="left:1054px;top:31px;width:156px;height:22px;box-sizing:border-box;border:1px solid #B7BCDC;border-radius:4px;background:#fff"></div>
<svg style="left:1063px;top:36px" width="18" height="16" viewBox="0 0 18 16"><path d="M1.5 11.5C3 7 6 5.6 8.6 5.4L8.4 1.4L10.4 3H12.4L14 1.2L14.2 6.2C13.6 8 12.4 8.6 11.6 8.6C13 9.6 14.4 11 15 12.6C12 10.4 9 9.6 6.6 9.4C4.6 9.6 3 10.4 1.5 11.5Z" fill="#D7A33D"/><path d="M9 2.6L10.4 3.6H12.4L13.6 2.6L13.7 6C13.2 7.4 12 7.8 11 7.6C9.8 7.4 9 6.4 9 5Z" fill="#E9CE96"/><path d="M6.2 4.4C4.6 4.2 3.2 5 2.6 6.6" stroke="#2a2a2a" stroke-width="0.8" fill="none"/><path d="M8.6 6.8L10.2 8.6L8.2 8.8ZM12.6 7.6L13.8 7.2V8.4ZM5.4 9.4L7.4 10L6.8 11.2Z" fill="#222"/><path d="M8.5 1.2L8.7 3.2M14 1.2L13.8 3" stroke="#333" stroke-width="0.9"/><circle cx="14.4" cy="12.3" r="3" fill="#fff"/><circle cx="14.4" cy="12.3" r="2.3" fill="#4FCB2E"/></svg>
<span class="t" style="left:1083.80px;top:32.30px;font-size:12.3px;color:#131316;letter-spacing:-0.288px;">Tomcat 8.5.73-</span>
<svg style="left:1162px;top:36.5px" width="22" height="11" viewBox="0 0 22 11"><g fill="none" stroke="#131316" stroke-width="1"><path d="M4 0.4L0.4 5.6M2.6 3.6V10.8M4.4 4.2L11.2 3.4M6.8 0.4C7 4.6 8.4 8.6 10.6 10.4L11.3 8.4M9.2 0.8L10.4 2"/><path d="M12.4 1.6H16M12.6 5H15.8M14.2 1.6V9M12.2 9.9L16.2 8.5M17 0.9H21.4V5.6H17ZM17 3.2H21.4M19.2 0.9V10.2M17 7.8H21.4M16.4 10.4H21.9"/></g></svg>
<svg style="left:1191.6px;top:40px" width="8.6" height="4.8" viewBox="0 0 8.6 4.8"><path d="M0 0H8.6L4.3 4.8Z" fill="#555D7B"/></svg>
<svg style="left:1219px;top:34px" width="16" height="16" viewBox="0 0 16 16"><path d="M11.2 6.2A5 5 0 1 0 8 13.6" fill="none" stroke="#59A57C" stroke-width="2"/><path d="M8.6 1L14.4 4.6L9 7.8Z" fill="#59A57C"/><rect x="8.6" y="9.6" width="5.6" height="5.6" fill="#555D7B"/></svg>
<svg style="left:1245px;top:34px" width="14" height="16" viewBox="0 0 14 16"><g fill="#59A57C"><path d="M3.4 6.2A3.6 3.4 0 0 1 10.6 6.2V11A3.6 3.9 0 0 1 3.4 11Z"/></g><g stroke="#59A57C" stroke-width="1.4" fill="none"><path d="M0.8 5.9H13.2M0.8 9.1H13.2M0.8 12.4H13.2M4.2 1L5.8 3.6M9.8 1L8.2 3.6"/></g><path d="M4.4 7.5H9.6M4.4 10.8H9.6" stroke="#EFEEF8" stroke-width="1.1"/></svg>
<svg style="left:1270px;top:35px" width="18" height="16" viewBox="0 0 18 16"><path d="M1 1.7L6 0.7V12.6C3.4 11.6 1 9.8 1 7.2Z" fill="#616888"/><path d="M6 1.3L10.2 2.1V7.2C10.2 9.4 8.4 11 6 12" fill="none" stroke="#616888" stroke-width="1.3"/><path d="M8.4 5.4V15.8L17 10.6Z" fill="#EFEEF8"/><path d="M9.1 6.2V14.8L15.9 10.5Z" fill="#59A57C"/></svg>
<svg style="left:1294px;top:35px" width="18" height="16" viewBox="0 0 18 16"><circle cx="6.7" cy="6.7" r="5.3" fill="none" stroke="#616888" stroke-width="1.3"/><path d="M7.7 3.6L5.3 8.4" fill="none" stroke="#616888" stroke-width="1.3"/><path d="M8.4 5.4V15.8L17 10.6Z" fill="#EFEEF8"/><path d="M9.1 6.2V14.8L15.9 10.5Z" fill="#59A57C"/></svg>
<svg style="left:1317px;top:41px" width="8" height="4" viewBox="0 0 8 4"><path d="M0 0H8L4 4Z" fill="#555D7B"/></svg>
<div class="a" style="left:1336px;top:37px;width:10px;height:10px;background:#C8506C;"></div>
<div class="a" style="left:1357px;top:32px;width:1px;height:20px;background:#C9CCE3;"></div>
<svg style="left:1367px;top:36px" width="16" height="14" viewBox="0 0 16 14"><path d="M0 0.6H5L6.8 2.4H13.6V11H0Z" fill="#555D7B"/><rect x="6.6" y="5.6" width="9" height="8.4" fill="#EFEEF8"/><g fill="#3B8FE6"><rect x="7.5" y="6" width="3" height="3"/><rect x="11.5" y="6" width="3" height="3"/><rect x="7.5" y="10" width="3" height="3"/><rect x="11.5" y="10" width="3" height="3"/></g></svg>
<div class="a" style="left:1390px;top:32px;width:1px;height:20px;background:#C9CCE3;"></div>
<svg style="left:1398px;top:36px" width="14" height="12" viewBox="0 0 14 12"><rect x="0.6" y="0.6" width="12.8" height="10.8" fill="none" stroke="#555D7B" stroke-width="1.2"/><rect x="0.6" y="0.6" width="12.8" height="2.4" fill="#555D7B"/><path d="M4 4.6V9.6L8.4 7.1Z" fill="#59A57C"/></svg>
<svg style="left:1419px;top:34px" width="16" height="16" viewBox="0 0 16 16"><circle cx="6.4" cy="6.6" r="4.6" fill="none" stroke="#555D7B" stroke-width="1.8"/><path d="M9.6 10L14 14.6" stroke="#555D7B" stroke-width="2.2"/></svg>
<svg style="left:30px;top:64px" width="14" height="13" viewBox="0 0 14 13"><rect x="0" y="0" width="14" height="13" fill="#9FAFD8"/><rect x="1" y="2.6" width="12" height="9.4" fill="#fff"/><rect x="2" y="3.8" width="10" height="7.2" fill="#8CCBEA"/></svg>
<span class="t" style="left:49.50px;top:60.50px;font-size:13px;color:#131316;letter-spacing:0.005px;">Project</span>
<svg style="left:98.6px;top:68.8px" width="9" height="5" viewBox="0 0 9 5"><path d="M0 0H9L4.5 5Z" fill="#6C7394"/></svg>
<svg style="left:329px;top:62px" width="16" height="16" viewBox="0 0 16 16"><circle cx="8" cy="7.9" r="6.3" fill="none" stroke="#6C7394" stroke-width="1.5"/><path d="M8 1.6V6.3M8 9.5V14.2M1.7 7.9H6.4M9.6 7.9H14.3" stroke="#6C7394" stroke-width="1.5"/></svg>
<svg style="left:357px;top:63px" width="12" height="14" viewBox="0 0 12 14"><path d="M0 1.6H12M0 12.6H12" stroke="#6C7394" stroke-width="1.6"/><path d="M6 3L9.6 6.4H2.4ZM6 11.2L9.6 7.8H2.4Z" fill="#6C7394"/></svg>
<svg style="left:383px;top:63px" width="12" height="14" viewBox="0 0 12 14"><path d="M0 7H12" stroke="#6C7394" stroke-width="1.6"/><path d="M6 5L9.6 1.4H2.4ZM6 9L9.6 12.8H2.4Z" fill="#6C7394"/></svg>
<div class="a" style="left:405px;top:60px;width:1px;height:20px;background:#C9CCE3;"></div>
<svg style="left:414px;top:62px" width="16" height="16" viewBox="0 0 16 16"><path d="M6.63 1.44L9.37 1.44L9.48 3.33L11.21 4.33L12.90 3.48L14.28 5.86L12.70 6.90L12.70 8.90L14.28 9.94L12.90 12.32L11.21 11.47L9.48 12.47L9.37 14.36L6.63 14.36L6.52 12.47L4.79 11.47L3.10 12.32L1.72 9.94L3.30 8.90L3.30 6.90L1.72 5.86L3.10 3.48L4.79 4.33L6.52 3.33Z" fill="#6C7394"/><circle cx="8" cy="7.9" r="2.3" fill="#EFEEF8"/></svg>
<div class="a" style="left:442px;top:69px;width:12px;height:1.6px;background:#6C7394;"></div>
<div class="a" style="left:1248px;top:57px;width:101px;height:26px;background:#F7F7FD;"></div>
<div class="a" style="left:1248px;top:81px;width:101px;height:3px;background:#3D78D8;"></div>
<svg style="left:462.6px;top:62px" width="16" height="16" viewBox="0 0 16 16"><circle cx="8" cy="8" r="7" fill="#88CFEF"/><path d="M10.2 6.5A2.7 2.7 0 1 0 10.2 9.7" fill="none" stroke="#3B4766" stroke-width="1.2"/></svg>
<span class="t" style="left:483.40px;top:59.60px;font-size:11.5px;color:#131316;letter-spacing:-0.001px;">LoginServlet_2.java</span>
<svg style="left:591.6px;top:66px" width="8" height="8" viewBox="0 0 8 8"><path d="M0.7 0.7L7.3 7.3M7.3 0.7L0.7 7.3" stroke="#A9AEC9" stroke-width="1"/></svg>
<svg style="left:614.6px;top:62px" width="16" height="16" viewBox="0 0 16 16"><circle cx="8" cy="8" r="7" fill="#88CFEF"/><path d="M10.2 6.5A2.7 2.7 0 1 0 10.2 9.7" fill="none" stroke="#3B4766" stroke-width="1.2"/><path d="M8.6 2.4L12.3 -0.4V5.2Z" fill="#fff" stroke="#fff" stroke-width="0.5"/><path d="M12.7 -0.4V5.2L16.6 2.4Z" fill="#fff" stroke="#fff" stroke-width="0.5"/><path d="M9 2.4L12.2 0V4.8Z" fill="#E0623C"/><path d="M13 0V4.8L16.2 2.4Z" fill="#5BA346"/></svg>
<span class="t" style="left:634.90px;top:59.60px;font-size:11.5px;color:#131316;letter-spacing:0.097px;">JdbcUtilsTest.java</span>
<svg style="left:735.8px;top:66px" width="8" height="8" viewBox="0 0 8 8"><path d="M0.7 0.7L7.3 7.3M7.3 0.7L0.7 7.3" stroke="#A9AEC9" stroke-width="1"/></svg>
<svg style="left:758.8px;top:62px" width="16" height="16" viewBox="0 0 16 16"><circle cx="8" cy="8" r="7" fill="#88CFEF"/><path d="M10.2 6.5A2.7 2.7 0 1 0 10.2 9.7" fill="none" stroke="#3B4766" stroke-width="1.2"/><path d="M8.6 2.4L12.3 -0.4V5.2Z" fill="#fff" stroke="#fff" stroke-width="0.5"/><path d="M12.7 -0.4V5.2L16.6 2.4Z" fill="#fff" stroke="#fff" stroke-width="0.5"/><path d="M9 2.4L12.2 0V4.8Z" fill="#E0623C"/><path d="M13 0V4.8L16.2 2.4Z" fill="#5BA346"/></svg>
<span class="t" style="left:779.00px;top:59.60px;font-size:11.5px;color:#131316;letter-spacing:-0.106px;">BeanUtilsTest.java</span>
<svg style="left:879px;top:66px" width="8" height="8" viewBox="0 0 8 8"><path d="M0.7 0.7L7.3 7.3M7.3 0.7L0.7 7.3" stroke="#A9AEC9" stroke-width="1"/></svg>
<svg style="left:903.7px;top:63px" width="15" height="15" viewBox="0 0 15 15"><path d="M6.2 0H12V6.8H2V4.6H6.2Z" fill="#9FAFD8"/><path d="M5.1 0.5V3.5H2.1Z" fill="#9FAFD8"/><rect x="0" y="8" width="8" height="7" fill="#E8806F"/><path d="M5.6 9.4L2.6 11.5L5.6 13.6" stroke="#3a2622" stroke-width="1.1" fill="none"/><circle cx="11.5" cy="11.5" r="3.6" fill="#fff"/><circle cx="11.5" cy="11.5" r="3.1" fill="#9FAFD8"/><path d="M9.6 10.2C10.8 9.8 11 11 10.4 11.8C10.2 12.6 11 13.2 11.2 14M12.4 9C12 10 13 10.6 13.8 10.4M12.6 12.4L13.6 13" stroke="#fff" stroke-width="0.9" fill="none"/></svg>
<span class="t" style="left:922.10px;top:59.60px;font-size:11.5px;color:#131316;letter-spacing:0.185px;">web.xml</span>
<svg style="left:973px;top:66px" width="8" height="8" viewBox="0 0 8 8"><path d="M0.7 0.7L7.3 7.3M7.3 0.7L0.7 7.3" stroke="#A9AEC9" stroke-width="1"/></svg>
<svg style="left:995.8px;top:62px" width="16" height="16" viewBox="0 0 16 16"><circle cx="8" cy="8" r="7" fill="#88CFEF"/><path d="M10.2 6.5A2.7 2.7 0 1 0 10.2 9.7" fill="none" stroke="#3B4766" stroke-width="1.2"/></svg>
<span class="t" style="left:1016.40px;top:59.60px;font-size:11.5px;color:#131316;letter-spacing:-0.018px;">LoginFailServlet.java</span>
<svg style="left:1130.2px;top:66px" width="8" height="8" viewBox="0 0 8 8"><path d="M0.7 0.7L7.3 7.3M7.3 0.7L0.7 7.3" stroke="#A9AEC9" stroke-width="1"/></svg>
<svg style="left:1153.5px;top:63px" width="15" height="15" viewBox="0 0 15 15"><path d="M6.2 0H12V6.8H2V4.6H6.2Z" fill="#9FAFD8"/><path d="M5.1 0.5V3.5H2.1Z" fill="#9FAFD8"/><rect x="0" y="8" width="15" height="7" fill="#8CC590"/><path d="M2.2 9.3V13.8M5.4 9.3V13.8M2.2 11.5H5.4" stroke="#2B3A2D" stroke-width="1.2" fill="none"/></svg>
<span class="t" style="left:1173.50px;top:59.60px;font-size:11.5px;color:#131316;letter-spacing:0.309px;">login.html</span>
<svg style="left:1233.2px;top:66px" width="8" height="8" viewBox="0 0 8 8"><path d="M0.7 0.7L7.3 7.3M7.3 0.7L0.7 7.3" stroke="#A9AEC9" stroke-width="1"/></svg>
<svg style="left:1256.5px;top:63px" width="15" height="15" viewBox="0 0 15 15"><path d="M6.2 0H12V6.8H2V4.6H6.2Z" fill="#9FAFD8"/><path d="M5.1 0.5V3.5H2.1Z" fill="#9FAFD8"/><rect x="0" y="8" width="15" height="7" fill="#E8806F"/><text x="7.5" y="14.1" font-family="Liberation Sans,sans-serif" font-weight="bold" font-size="6.4" text-anchor="middle" fill="#3a2622" textLength="13" lengthAdjust="spacingAndGlyphs">JSP</text></svg>
<span class="t" style="left:1275.80px;top:59.60px;font-size:11.5px;font-style:italic;color:#131316;letter-spacing:0.164px;">index.jsp</span>
<svg style="left:1333.3px;top:66px" width="8" height="8" viewBox="0 0 8 8"><path d="M0.7 0.7L7.3 7.3M7.3 0.7L0.7 7.3" stroke="#A9AEC9" stroke-width="1"/></svg>
<svg style="left:1355.4px;top:62px" width="16" height="16" viewBox="0 0 16 16"><circle cx="8" cy="8" r="7" fill="#88CFEF"/><path d="M10.2 6.5A2.7 2.7 0 1 0 10.2 9.7" fill="none" stroke="#3B4766" stroke-width="1.2"/></svg>
<span class="t" style="left:1376.40px;top:59.60px;font-size:11.5px;color:#131316;letter-spacing:0.000px;">Log</span>
<div class="a" style="left:1387px;top:58px;width:10px;height:24px;background:linear-gradient(90deg,rgba(238,238,248,0),#EFEEF8)"></div>
<div class="a" style="left:1392px;top:57px;width:27px;height:26px;background:#EFEEF8;"></div>
<svg style="left:1400px;top:67px" width="10" height="6" viewBox="0 0 10 6"><path d="M0.8 0.8L5 5L9.2 0.8" fill="none" stroke="#555D7B" stroke-width="1.5"/></svg>
<span class="t" style="left:-8.10px;top:74.00px;width:35.40px;font-size:11.5px;color:#131316;letter-spacing:-0.066px;transform:rotate(-90deg);transform-origin:50% 50%;">Project</span>
<svg style="left:5px;top:109px" width="11" height="9" viewBox="0 0 11 9"><path d="M0 0H4L5.6 1.8H11V9H0Z" fill="#5F6788"/></svg>
<span class="t" style="left:-14.20px;top:625.80px;width:47.60px;font-size:11.5px;color:#131316;letter-spacing:0.116px;transform:rotate(-90deg);transform-origin:50% 50%;">Structure</span>
<svg style="left:6px;top:667px" width="9" height="9" viewBox="0 0 9 9"><rect x="5" y="0" width="4" height="4" fill="#555D7B"/><rect x="0" y="5" width="4" height="4" fill="#555D7B"/><rect x="5" y="5" width="4" height="4" fill="#555D7B"/></svg>
<span class="t" style="left:-13.95px;top:711.95px;width:47.10px;font-size:11.5px;color:#131316;letter-spacing:-0.025px;transform:rotate(-90deg);transform-origin:50% 50%;">Favorites</span>
<svg style="left:5px;top:751px" width="11" height="11" viewBox="0 0 11 11"><path d="M5.5 0L7.2 3.7L11 4.2L8.2 6.9L8.9 11L5.5 9L2.1 11L2.8 6.9L0 4.2L3.8 3.7Z" fill="#555D7B"/></svg>
<span class="t" style="left:-0.60px;top:784.20px;width:20.40px;font-size:11.5px;color:#131316;letter-spacing:-1.527px;transform:rotate(-90deg);transform-origin:50% 50%;">Web</span>
<svg style="left:5px;top:810px" width="11.5" height="11.5" viewBox="0 0 11.5 11.5"><circle cx="5.75" cy="5.75" r="5.1" fill="none" stroke="#555D7B" stroke-width="1.3"/><path d="M2 3.4C3.6 3 4.6 4 4 5.4C3.4 6.6 4.6 7.4 4.8 9.6M7.6 1.4C7 3 8 4 9.8 3.6M7.4 7L9.4 8.2L8 10" stroke="#555D7B" stroke-width="1.4" fill="none"/></svg>
<svg style="left:1423.9px;top:67px" width="11.1" height="12.2" viewBox="0 0 11.1 12.2"><g fill="#6A7393"><ellipse cx="5.55" cy="1.9" rx="5.55" ry="1.9"/><path d="M0 3.4C1.4 5.4 9.7 5.4 11.1 3.4V5C9.7 7.2 1.4 7.2 0 5ZM0 6.2C1.4 8.2 9.7 8.2 11.1 6.2V7.8C9.7 10 1.4 10 0 7.8ZM0 9C1.4 11 9.7 11 11.1 9V10.2C9.7 12.8 1.4 12.8 0 10.2Z"/></g></svg>
<span class="t" style="left:1405.25px;top:98.65px;width:48.30px;font-size:11.5px;color:#131316;letter-spacing:-0.133px;transform:rotate(90deg);transform-origin:50% 50%;">Database</span>
<svg style="left:1423.3px;top:154.6px" width="13" height="10" viewBox="0 0 13 10"><text x="0" y="9.2" font-family="Liberation Sans,sans-serif" font-weight="bold" font-style="italic" font-size="15.5" fill="#616888" stroke="#616888" stroke-width="0.4" textLength="13.4" lengthAdjust="spacingAndGlyphs">m</text></svg>
<span class="t" style="left:1412.70px;top:178.20px;width:33.40px;font-size:11.5px;color:#131316;letter-spacing:-0.283px;transform:rotate(90deg);transform-origin:50% 50%;">Maven</span>
<svg style="left:30px;top:835px" width="18" height="16" viewBox="0 0 18 16"><path d="M1 6.5H5.4M1 8.5H4.6M15.4 6.2H17.2M15 8.2H16.6" stroke="#333" stroke-width="0.8"/><path d="M9.4 8.4L4 13.6" stroke="#C98A3E" stroke-width="3" stroke-linecap="round"/><path d="M9.2 8.6L4.2 13.4" stroke="#F2B265" stroke-width="1.6" stroke-linecap="round"/><circle cx="12.1" cy="5.4" r="4.1" fill="#9DCBF5" stroke="#D8A060" stroke-width="1.3"/><path d="M9.8 4.6A2.6 2.6 0 0 1 12.4 2.8" stroke="#E4F3FF" stroke-width="1.1" fill="none"/></svg>
<span class="t" style="left:51.60px;top:833.90px;font-size:11.3px;color:#131316;letter-spacing:0.000px;">TunnelliJ</span>
<svg style="left:117.5px;top:839.5px" width="11" height="9" viewBox="0 0 11 9"><g fill="#666E92"><rect x="0" y="0.2" width="2" height="1.8"/><rect x="0" y="3.6" width="2" height="1.8"/><rect x="0" y="7" width="2" height="1.8"/><rect x="3.4" y="0.2" width="7.2" height="1.8"/><rect x="3.4" y="3.6" width="7.2" height="1.8"/><rect x="3.4" y="7" width="7.2" height="1.8"/></g></svg>
<span class="t" style="left:133.60px;top:833.90px;font-size:11.3px;color:#131316;letter-spacing:-0.679px;">TODO</span>
<svg style="left:188px;top:838.7px" width="11" height="11" viewBox="0 0 11 11"><circle cx="5.5" cy="5.5" r="5.3" fill="#666E92"/><rect x="4.7" y="2.2" width="1.7" height="4.2" fill="#EFEEF8"/><rect x="4.7" y="7.4" width="1.7" height="1.6" fill="#EFEEF8"/></svg>
<span class="t" style="left:204.20px;top:833.90px;font-size:11.3px;color:#131316;letter-spacing:0.097px;">Problems</span>
<svg style="left:275px;top:838.5px" width="13" height="11" viewBox="0 0 13 11"><path d="M12.6 0C13.2 5.6 11 10.8 5.6 10.8C2.6 10.8 0.5 9.2 0.4 6.8C0.3 3.8 3.8 2.9 7 2.7C9.4 2.5 11.4 1.6 12.6 0Z" fill="#666E92"/><path d="M1.6 9.2C4 8.6 7.6 7 10 3.6" stroke="#EFEEF8" stroke-width="0.7" fill="none"/></svg>
<span class="t" style="left:292.20px;top:833.90px;font-size:11.3px;color:#131316;letter-spacing:0.029px;">Spring</span>
<svg style="left:347px;top:839px" width="11" height="10" viewBox="0 0 11 10"><rect x="0" y="0" width="11" height="10" fill="#666E92"/><path d="M2 2.6L4.6 5L2 7.4M5.4 7.6H9" stroke="#EFEEF8" stroke-width="1.1" fill="none"/></svg>
<span class="t" style="left:363.60px;top:833.90px;font-size:11.3px;color:#131316;letter-spacing:-0.043px;">Terminal</span>
<svg style="left:427.5px;top:838px" width="14" height="13" viewBox="0 0 14 13"><circle cx="5.6" cy="5.6" r="4.6" fill="none" stroke="#666E92" stroke-width="1.2"/><path d="M5.6 2.8V5.8L4 7.2" fill="none" stroke="#666E92" stroke-width="1.1"/><path d="M7 4.6V12.8L13.4 8.7Z" fill="#EFEEF8" stroke="#EFEEF8" stroke-width="1.2"/><path d="M7.8 5.8V11.6L12.4 8.7Z" fill="#666E92"/></svg>
<span class="t" style="left:444.60px;top:833.90px;font-size:11.3px;color:#131316;letter-spacing:0.315px;">Profiler</span>
<svg style="left:502px;top:837.5px" width="14" height="14" viewBox="0 0 14 14"><path d="M0.4 5.8L6.8 0.8L8 2.6L6 4.2L13 11.6L11 13.4L4.2 5.8L1.6 7.6Z" fill="#666E92"/></svg>
<span class="t" style="left:519.00px;top:833.90px;font-size:11.3px;color:#131316;letter-spacing:-0.031px;">Build</span>
<svg style="left:565px;top:838px" width="14" height="13" viewBox="0 0 14 13"><path d="M3.2 0.4H9L12 5.4L9 10.4H3.2L0.2 5.4Z" fill="#666E92"/><path d="M4.6 2.8V8L8.8 5.4Z" fill="#EFEEF8"/><circle cx="10.8" cy="10.2" r="2.6" fill="#EFEEF8"/><circle cx="10.8" cy="10.2" r="1.9" fill="#3DB23A"/></svg>
<span class="t" style="left:582.00px;top:833.90px;font-size:11.3px;color:#131316;letter-spacing:0.096px;">Services</span>
<svg style="left:1339.9px;top:837.8px" width="13" height="13" viewBox="0 0 13 13"><path d="M6.5 0A6.5 6.5 0 1 0 6.5 13H13V6.5A6.5 6.5 0 0 0 6.5 0Z" fill="#E8A030"/><text x="6.7" y="10" font-family="Liberation Sans,sans-serif" font-weight="bold" font-size="9.4" text-anchor="middle" fill="#33291a" textLength="10.4" lengthAdjust="spacingAndGlyphs">9+</text></svg>
<span class="t" style="left:1357.60px;top:833.90px;font-size:11.3px;color:#131316;letter-spacing:-0.009px;">Event Log</span>
<div class="a" style="left:1239.6px;top:842.7px;font-size:17.6px;line-height:24px;white-space:pre;color:rgba(255,255,255,0.6);letter-spacing:-0.3px;text-shadow:0.8px 0.5px 0.45px rgba(60,60,65,0.72),-0.35px -0.35px 0.4px rgba(120,120,125,0.5);">CSDN<span style="position:absolute;left:55.6px;top:0;letter-spacing:0.73px">@liaowenxiong</span></div>
<svg style="left:5px;top:858.6px" width="14" height="13" viewBox="0 0 14 13"><path d="M4.2 0.6H12.9V9.6H4.2Z M1.4 3.2V12H10.6" fill="none" stroke="#5A6285" stroke-width="1"/></svg>
<span class="t" style="left:31.40px;top:854.70px;font-size:11.3px;color:#131316;letter-spacing:0.270px;">Shortcuts conflicts: Find Action... and 14 more shortcut conflict with macOS shortcuts. Modify these shortcuts or change macOS system settings. // Modify Shortcuts // Don&#x27;t Show Ag... (17 minutes ago)</span>
<span class="t" style="left:1255.60px;top:854.70px;font-size:11.3px;color:#131316;letter-spacing:0.000px;">3:7</span>
<span class="t" style="left:1283.20px;top:854.70px;font-size:11.3px;color:#131316;letter-spacing:0.000px;">LF</span>
<span class="t" style="left:1307.80px;top:854.70px;font-size:11.3px;color:#90A4D0;letter-spacing:0.271px;">UTF-8</span>
<span class="t" style="left:1352.90px;top:854.70px;font-size:11.3px;color:#131316;letter-spacing:0.097px;">2 spaces*</span>
<svg style="left:1415px;top:860px" width="11" height="10" viewBox="0 0 11 10"><rect x="2.6" y="4.2" width="8" height="5.8" fill="#5A6285"/><path d="M1 4.6V2.8A1.9 1.9 0 0 1 4.8 2.8V4.4" fill="none" stroke="#5A6285" stroke-width="1.1"/></svg>
<svg style="left:21.7px;top:827.1px" width="87.1" height="33.7" viewBox="0 0 87.1 33.7"><rect x="1.45" y="1.45" width="84.2" height="30.8" fill="none" stroke="#E01B2D" stroke-width="2.9"/></svg>
<svg style="left:100px;top:765px" width="80" height="65" viewBox="0 0 80 65"><path d="M67.9 7.1L15.6 49.9" stroke="#E01B2D" stroke-width="3.5" fill="none"/><path d="M8.7 56L12.5 45.2L20 53.5Z" fill="#E01B2D"/></svg>
<svg style="left:0px;top:0px" width="8" height="8" viewBox="0 0 8 8"><path d="M0 0H6.6C2.9 0.5 0.5 2.9 0 6.6Z" fill="#071434"/></svg>
<svg style="left:0px;top:865px" width="10" height="10" viewBox="0 0 10 10"><path d="M0 10H9C4 9.4 0.8 6 0 0Z" fill="#0a0a0a"/></svg>
<svg style="left:1429px;top:865px" width="10" height="10" viewBox="0 0 10 10"><path d="M10 10H1C6 9.4 9.2 6 10 0Z" fill="#0a0a0a"/></svg>
<svg style="left:1416px;top:0px" width="23" height="24" viewBox="0 0 23 24"><rect x="3" y="3.1" width="18" height="17.6" rx="3.6" fill="#000" style="filter:drop-shadow(0 0 1.2px rgba(120,130,190,0.8))"/><path d="M17.4 8.6C13 7.4 7.8 8 7.4 10.4C7.2 12.8 17.6 11.6 17.4 14.2C17.2 16.4 11.6 16.8 8 16" fill="none" stroke="#fff" stroke-width="2.6" stroke-linecap="butt"/><path d="M17.5 0H23V4.2C21.6 2.4 19.8 1 17.5 0Z" fill="#2F4A12"/></svg>
</div></body></html>
